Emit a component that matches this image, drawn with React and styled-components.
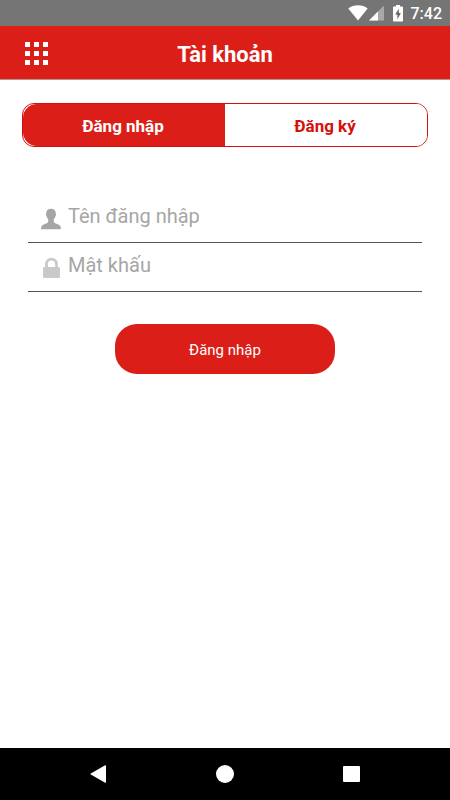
import { useState } from "react";
import styled, { createGlobalStyle } from "styled-components";

const GlobalStyle = createGlobalStyle`
  * {
    box-sizing: border-box;
  }
  body {
    margin: 0;
    background: #fff;
    font-family: Roboto, "Noto Sans", sans-serif;
  }
  button,
  input {
    font-family: inherit;
  }
`;

const Screen = styled.div`
  display: flex;
  flex-direction: column;
  min-height: 100vh;
`;

const StatusBar = styled.div`
  display: flex;
  align-items: center;
  justify-content: flex-end;
  height: 26px;
  padding-right: 8px;
  background: #757575;
  color: #fff;
  font-size: 16px;
  font-weight: 500;

  svg {
    display: block;
  }
`;

const Clock = styled.span`
  margin-left: 8px;
`;

const Header = styled.header`
  display: grid;
  grid-template-columns: 48px 1fr 48px;
  align-items: center;
  height: 54px;
  padding-top: 2px;
  border-bottom: 1px solid #b9918f;
  background: #db1f18;
`;

const MenuButton = styled.button`
  display: flex;
  justify-content: flex-end;
  padding: 0;
  border: 0;
  background: none;
  cursor: pointer;
`;

const Title = styled.h1`
  margin: 0;
  padding-top: 2px;
  color: #fff;
  font-size: 22px;
  font-weight: 700;
  line-height: 26px;
  text-align: center;
`;

const Main = styled.main`
  flex: 1;
  padding: 23px 22px;
`;

const Tabs = styled.div`
  display: flex;
  height: 44px;
  overflow: hidden;
  border: 1px solid #d5100c;
  border-radius: 12px;
`;

const Tab = styled.button`
  flex: 1 1 0;
  padding: 2px 2px 0 0;
  border: 0;
  border-radius: ${(props) => (props.$active ? props.$corners : "0")};
  background: ${(props) => (props.$active ? "#db1f18" : "#fff")};
  color: ${(props) => (props.$active ? "#fff" : "#d5100c")};
  font-size: 17px;
  font-weight: 700;
  cursor: pointer;
`;

const Form = styled.form`
  display: flex;
  flex-direction: column;
  margin: 47px 6px 0;
`;

const Field = styled.label`
  display: flex;
  align-items: center;
  height: 49px;
  padding-left: 12px;
  border-bottom: 1px solid #555;

  svg {
    flex: none;
    margin-top: 2px;
  }
`;

const Input = styled.input`
  flex: 1;
  min-width: 0;
  height: 48px;
  padding: 0 0 4px 6px;
  border: 0;
  outline: 0;
  background: none;
  color: #333;
  font-size: 20px;

  &::placeholder {
    color: #a6a6a6;
    opacity: 1;
  }
`;

const Submit = styled.button`
  align-self: center;
  width: 56%;
  height: 50px;
  margin-top: 32px;
  padding: 2px 0 0;
  border: 0;
  border-radius: 22px;
  background: #db1f18;
  color: #fff;
  font-size: 15px;
  cursor: pointer;
`;

const NavBar = styled.nav`
  display: flex;
  align-items: center;
  justify-content: space-between;
  height: 52px;
  padding: 0 20%;
  background: #000;
`;

const NavButton = styled.button`
  display: flex;
  padding: 0;
  border: 0;
  background: none;
  cursor: pointer;
`;

const WifiIcon = () => (
  <svg width="20" height="16" viewBox="0 0 20 16" fill="#fff">
    <path d="M10 15.5 0.3 3.6C3 1.4 6.4 0.3 10 0.3s7 1.1 9.7 3.3z" />
  </svg>
);

const SignalIcon = () => (
  <svg width="17" height="16" viewBox="0 0 17 16">
    <path d="M16 0.5v15H1z" fill="#a9a9a9" />
    <path d="M10 6.5v9H1z" fill="#fff" />
  </svg>
);

const BatteryIcon = () => (
  <svg width="18" height="18" viewBox="0 0 18 18">
    <path
      d="M11 1h4v1.5h2.2a.8.8 0 0 1 .8.8v13.4a.8.8 0 0 1-.8.8H8.8a.8.8 0 0 1-.8-.8V3.3a.8.8 0 0 1 .8-.8H11z"
      fill="#fff"
    />
    <path d="M13.8 4.7 10.2 10.6h2.2v4.6l3.5-6.3h-2.1z" fill="#666" />
  </svg>
);

const GridIcon = () => (
  <svg width="23" height="23" viewBox="0 0 23 23" fill="#fff">
    {[0, 9, 18].map((y) =>
      [0, 9, 18].map((x) => (
        <rect key={`${x}-${y}`} x={x} y={y} width="5" height="5" />
      ))
    )}
  </svg>
);

const UserIcon = () => (
  <svg width="22" height="22" viewBox="0 0 22 22" fill="#a6a6a6">
    <path d="M11 .8C7.9.8 6.2 2.7 6.2 5.3c0 .6-.3.9-.2 1.6.1.7.5.8.6 1.3.3 1.3.8 2.3 1.6 3.1v2.7c-.5 1.2-2.2 1.5-4 2.2C2.3 17 1 18 1 21.2h20c0-3.2-1.3-4.2-3.2-5-1.8-.7-3.5-1-4-2.2v-2.7c.8-.8 1.3-1.8 1.6-3.1.1-.5.5-.6.6-1.3.1-.7-.2-1-.2-1.6C15.8 2.7 14.1.8 11 .8z" />
  </svg>
);

const LockIcon = () => (
  <svg width="22" height="22" viewBox="0 0 22 22">
    <path
      d="M6.5 11V7.1a5 5 0 0 1 10 0V11"
      fill="none"
      stroke="#c9c9c9"
      strokeWidth="2.8"
    />
    <rect x="3" y="10" width="17" height="11" rx="1.5" fill="#c9c9c9" />
  </svg>
);

const App = () => {
  const [tab, setTab] = useState("login");

  return (
    <>
      <GlobalStyle />
      <Screen>
        <StatusBar>
          <WifiIcon />
          <SignalIcon />
          <BatteryIcon />
          <Clock>7:42</Clock>
        </StatusBar>
        <Header>
          <MenuButton type="button" aria-label="Menu">
            <GridIcon />
          </MenuButton>
          <Title>Tài khoản</Title>
        </Header>
        <Main>
          <Tabs role="tablist">
            <Tab
              type="button"
              role="tab"
              aria-selected={tab === "login"}
              $active={tab === "login"}
              $corners="14px 0 0 14px"
              onClick={() => setTab("login")}
            >
              Đăng nhập
            </Tab>
            <Tab
              type="button"
              role="tab"
              aria-selected={tab === "register"}
              $active={tab === "register"}
              $corners="0 14px 14px 0"
              onClick={() => setTab("register")}
            >
              Đăng ký
            </Tab>
          </Tabs>
          <Form onSubmit={(e) => e.preventDefault()}>
            <Field>
              <UserIcon />
              <Input
                type="text"
                name="username"
                aria-label="Tên đăng nhập"
                placeholder="Tên đăng nhập"
              />
            </Field>
            <Field>
              <LockIcon />
              <Input
                type="password"
                name="password"
                aria-label="Mật khấu"
                placeholder="Mật khấu"
              />
            </Field>
            <Submit type="submit">Đăng nhập</Submit>
          </Form>
        </Main>
        <NavBar>
          <NavButton type="button" aria-label="Back">
            <svg width="18" height="18" viewBox="0 0 18 18" fill="#fff">
              <path d="M15.2.2q.8-.3.8.6v16.4q0 .9-.8.6L.8 9.6q-.8-.6 0-1.2z" />
            </svg>
          </NavButton>
          <NavButton type="button" aria-label="Home">
            <svg width="18" height="18" viewBox="0 0 18 18" fill="#fff">
              <circle cx="9" cy="9" r="9" />
            </svg>
          </NavButton>
          <NavButton type="button" aria-label="Recent apps">
            <svg width="18" height="18" viewBox="0 0 18 18" fill="#fff">
              <rect x="1" y="1" width="17" height="16" rx="1" />
            </svg>
          </NavButton>
        </NavBar>
      </Screen>
    </>
  );
};

export default App;
